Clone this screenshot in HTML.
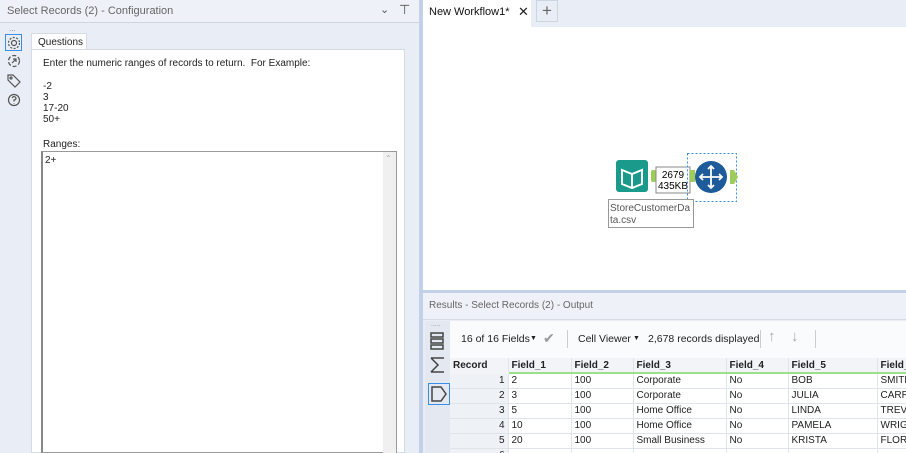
<html><head><style>
*{margin:0;padding:0;box-sizing:border-box}
html,body{width:906px;height:453px;overflow:hidden}
body{position:relative;background:#e8edf6;font-family:"Liberation Sans",sans-serif;font-size:10px;color:#222}
.a{position:absolute;white-space:nowrap}
td{border-right:1px solid #dfe3ea;border-bottom:1px solid #dfe3ea;height:15px;padding:0 3px;white-space:nowrap;overflow:hidden;font-size:10px;line-height:14px}
table{border-collapse:collapse;table-layout:fixed}
th{text-align:left;font-weight:bold;font-size:10px;padding:0 3px;height:15px;border-right:1px solid #dfe3ea;border-bottom:2px solid #9be08a;background:#f2f4f8}
</style></head><body>
<div class="a" style="left:0;top:0;width:419px;height:23px;background:#eef1f7;border-bottom:1px solid #cfd6e2"></div>
<div class="a" style="left:7px;top:5px;color:#666;font-size:11px">Select Records (2) - Configuration</div>
<div class="a" style="left:380px;top:3px;color:#555;font-size:11px">&#8964;</div>
<div class="a" style="left:399px;top:2px;color:#555;font-size:13px">&#x22A4;</div>
<div class="a" style="left:9px;top:24px;color:#888;font-size:8px">...</div>
<div class="a" style="left:5px;top:34px;width:17px;height:17px;border:1px solid #3a8ee6"></div>
<svg class="a" style="left:6px;top:35px" width="16" height="80" viewBox="0 0 16 80" fill="none" stroke="#555" stroke-width="1.2">
<circle cx="8" cy="8" r="2.5"/><circle cx="8" cy="8" r="5.5" stroke-dasharray="2 1.5"/>
<circle cx="8" cy="26" r="5.5" stroke-dasharray="4 2"/><path d="M6 28l4-4M7 24h3v3"/>
<path d="M2 40v5l7 7 5-5-7-7z"/><circle cx="5" cy="43" r="1"/>
<circle cx="8" cy="65" r="5.5"/><path d="M6 63q2-3 4 0q0 2-2 2v1.5M8 68v.5"/>
</svg>
<div class="a" style="left:31px;top:33px;width:56px;height:17px;background:#fff;border:1px solid #d5dbe5;border-bottom:none;padding:3px 0 0 6px;font-size:10px">Questions</div>
<div class="a" style="left:31px;top:49px;width:374px;height:404px;background:#fff;border:1px solid #d5dbe5"></div>
<div class="a" style="left:43px;top:58px;font-size:10px;line-height:11.3px">Enter the numeric ranges of records to return.&nbsp; For Example:<br><br>-2<br>3<br>17-20<br>50+</div>
<div class="a" style="left:43px;top:139px;font-size:10px">Ranges:</div>
<div class="a" style="left:41px;top:151px;width:356px;height:302px;border:1px solid #999;border-left:2px solid #888;background:#fff"></div>
<div class="a" style="left:383px;top:152px;width:13px;height:301px;background:#f0f0f0"></div>
<div class="a" style="left:385px;top:154px;color:#aaa;font-size:8px">&#8963;</div>
<div class="a" style="left:45px;top:155px">2+</div>
<div class="a" style="left:419px;top:0;width:4px;height:453px;background:#c3d1e8"></div>
<div class="a" style="left:423px;top:0;width:483px;height:27px;background:#e8edf6"></div>
<div class="a" style="left:423px;top:0;width:108px;height:27px;background:#fff"></div>
<div class="a" style="left:429px;top:6px;font-size:11px;color:#111">New Workflow1*</div>
<div class="a" style="left:518px;top:4px;font-size:13px">&#x2715;</div>
<div class="a" style="left:536px;top:0;width:22px;height:22px;border:1px solid #cdd5e2;color:#666;font-size:17px;text-align:center;line-height:20px">+</div>
<div class="a" style="left:423px;top:27px;width:483px;height:263px;background:#fff"></div>
<svg class="a" style="left:600px;top:150px" width="160" height="82">
<rect x="16" y="10" width="32" height="32" rx="3" fill="#1a9a8a"/>
<path d="M22 20l10 4 10-4v14l-10 4-10-4z M32 24v14" stroke="#fff" stroke-width="2" fill="none"/>
<rect x="51" y="20" width="5" height="12" rx="2" fill="#9ccc5a"/>
<rect x="56" y="17" width="34" height="26" fill="#fff" stroke="#888"/>
<text x="73" y="28" font-size="10" text-anchor="middle" font-family="Liberation Sans">2679</text>
<text x="73" y="39" font-size="10" text-anchor="middle" font-family="Liberation Sans">435KB</text>
<rect x="90" y="20" width="5" height="12" fill="#9ccc5a"/>
<rect x="87.5" y="3.5" width="49" height="48" fill="none" stroke="#3a8ee6" stroke-dasharray="2 2"/>
<circle cx="111" cy="27" r="16" fill="#1d5b9a"/>
<path d="M111 16v22M100 27h22M108 19l3-3 3 3M108 35l3 3 3-3M103 24l-3 3 3 3M119 24l3 3-3 3" stroke="#fff" stroke-width="1.8" fill="none"/>
<path d="M130 20h4l4 7-4 7h-4z" fill="#9ccc5a"/>
<rect x="8.5" y="49.5" width="85" height="28" fill="#fff" stroke="#999"/>
<text x="10" y="61" font-size="10" fill="#555" font-family="Liberation Sans">StoreCustomerDa</text>
<text x="10" y="73" font-size="10" fill="#555" font-family="Liberation Sans">ta.csv</text>
</svg>
<div class="a" style="left:423px;top:290px;width:483px;height:3px;background:#c3d1e8"></div>
<div class="a" style="left:423px;top:293px;width:483px;height:27px;background:#eef1f7;border-bottom:1px solid #d5dbe5"></div>
<div class="a" style="left:429px;top:300px;color:#666;font-size:10px">Results - Select Records (2) - Output</div>
<div class="a" style="left:425px;top:321px;width:25px;height:132px;background:#e3e8f1"></div>
<div class="a" style="left:431px;top:321px;color:#888;font-size:7px">.....</div>
<svg class="a" style="left:428px;top:330px" width="22" height="76" fill="none" stroke="#444" stroke-width="1.5">
<rect x="3" y="3" width="12" height="4"/><rect x="3" y="9" width="12" height="4"/><rect x="3" y="15" width="12" height="4"/>
<path d="M3 28h13M3 42h13M3 28l7 7-7 7"/>
<rect x="0.5" y="53.5" width="21" height="21" stroke="#3a8ee6" stroke-width="1"/>
<path d="M4 57h9l5 7-5 7h-9z"/>
</svg>
<div class="a" style="left:450px;top:321px;width:456px;height:37px;background:#fafbfd"></div>
<div class="a" style="left:461px;top:333px;font-size:10.5px;color:#222">16 of 16 Fields</div>
<div class="a" style="left:530px;top:335px;font-size:7px">&#9660;</div>
<div class="a" style="left:543px;top:330px;font-size:14px;color:#999">&#10004;</div>
<div class="a" style="left:567px;top:330px;width:1px;height:18px;background:#ccc"></div>
<div class="a" style="left:578px;top:333px;font-size:10.5px;color:#222">Cell Viewer</div>
<div class="a" style="left:633px;top:335px;font-size:7px">&#9660;</div>
<div class="a" style="left:648px;top:333px;font-size:10.5px;color:#222">2,678 records displayed</div>
<div class="a" style="left:760px;top:330px;width:1px;height:18px;background:#ccc"></div>
<div class="a" style="left:768px;top:328px;font-size:15px;color:#aaa">&#8593;</div>
<div class="a" style="left:791px;top:328px;font-size:15px;color:#aaa">&#8595;</div>
<div class="a" style="left:815px;top:330px;width:1px;height:18px;background:#ccc"></div>
<table class="a" style="left:450px;top:358px;width:480px;background:#fff">
<colgroup><col style="width:58px"><col style="width:63px"><col style="width:62px"><col style="width:93px"><col style="width:62px"><col style="width:89px"><col style="width:53px"></colgroup>
<tr><th style="border-bottom:2px solid #f2f4f8">Record</th><th>Field_1</th><th>Field_2</th><th>Field_3</th><th>Field_4</th><th>Field_5</th><th>Field_6</th></tr>
<tr><td style="text-align:right;background:#eef1f6">1</td><td>2</td><td>100</td><td>Corporate</td><td>No</td><td>BOB</td><td>SMITH</td></tr>
<tr><td style="text-align:right;background:#eef1f6">2</td><td>3</td><td>100</td><td>Corporate</td><td>No</td><td>JULIA</td><td>CARRE</td></tr>
<tr><td style="text-align:right;background:#eef1f6">3</td><td>5</td><td>100</td><td>Home Office</td><td>No</td><td>LINDA</td><td>TREVIN</td></tr>
<tr><td style="text-align:right;background:#eef1f6">4</td><td>10</td><td>100</td><td>Home Office</td><td>No</td><td>PAMELA</td><td>WRIGH</td></tr>
<tr><td style="text-align:right;background:#eef1f6">5</td><td>20</td><td>100</td><td>Small Business</td><td>No</td><td>KRISTA</td><td>FLORE</td></tr>
<tr><td style="text-align:right;background:#eef1f6">6</td><td></td><td></td><td></td><td></td><td></td><td></td></tr>
</table>
</body></html>
